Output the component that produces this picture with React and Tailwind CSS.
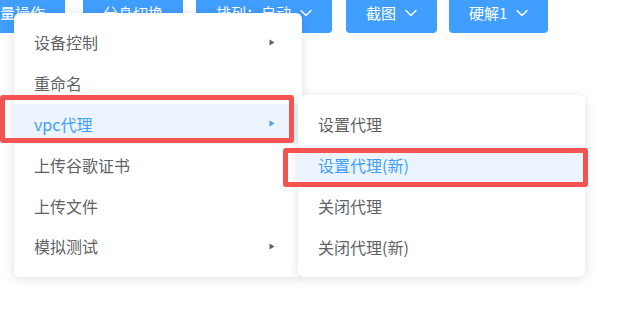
const Chevron = () => (
  <svg width="12" height="8" viewBox="0 0 12 8" fill="none" className="shrink-0">
    <path d="M1 1.5l5 5 5-5" stroke="white" strokeWidth="1.4" strokeLinecap="round" strokeLinejoin="round" />
  </svg>
);

const Caret = ({ active }) => (
  <svg width="6" height="7" viewBox="0 0 6 7" className="shrink-0">
    <path d="M0.5 0.5L5.5 3.5L0.5 6.5Z" fill={active ? "#409eff" : "#606266"} />
  </svg>
);

const buttons = [
  { text: "批量操作", ml: "ml-0" },
  { text: "分身切换", ml: "ml-[18px]" },
  { text: "排列：自动", ml: "ml-[13px]", arrow: true },
  { text: "截图", ml: "ml-[14px]", arrow: true },
  { text: "硬解1", ml: "ml-[12px]", arrow: true },
];

const mainItems = [
  { label: "设备控制", sub: true },
  { label: "重命名" },
  { label: "vpc代理", sub: true, active: true },
  { label: "上传谷歌证书" },
  { label: "上传文件" },
  { label: "模拟测试", sub: true },
];

const subItems = [
  { label: "设置代理" },
  { label: "设置代理(新)", active: true },
  { label: "关闭代理" },
  { label: "关闭代理(新)" },
];

export default function App() {
  return (
    <div
      className="relative w-[640px] h-[310px] bg-white overflow-hidden"
      style={{ fontFamily: '"Noto Sans CJK SC", "Noto Sans", sans-serif' }}
    >
      {/* toolbar */}
      <div className="flex -mt-[7px] -ml-[35px]">
        {buttons.map((b) => (
          <button
            key={b.text}
            className={`${b.ml} h-[40px] px-[20px] flex items-center gap-[9px] bg-[#409eff] text-white text-[15px] rounded-[4px] whitespace-nowrap`}
          >
            <span>{b.text}</span>
            {b.arrow && <Chevron />}
          </button>
        ))}
      </div>

      {/* main dropdown */}
      <div className="absolute left-[14px] top-[13px] w-[288px] pt-[9px] pb-[10px] bg-white rounded-[6px] shadow-[0_2px_12px_rgba(0,0,0,0.12)]">
        {mainItems.map((it) => (
          <div
            key={it.label}
            className={`h-[40.8px] pl-[20px] pr-[27px] flex items-center justify-between text-[16px] ${
              it.active ? "bg-[#ecf5ff] text-[#409eff]" : "text-[#606266]"
            }`}
          >
            <span>{it.label}</span>
            {it.sub && <Caret active={it.active} />}
          </div>
        ))}
      </div>

      {/* sub dropdown */}
      <div className="absolute left-[298px] top-[95px] w-[287px] pt-[9px] pb-[10px] bg-white rounded-[6px] shadow-[0_2px_12px_rgba(0,0,0,0.12)]">
        {subItems.map((it) => (
          <div
            key={it.label}
            className={`h-[40.8px] pl-[20px] flex items-center text-[16px] ${
              it.active ? "bg-[#ecf5ff] text-[#409eff]" : "text-[#606266]"
            }`}
          >
            {it.label}
          </div>
        ))}
      </div>

      {/* annotation boxes */}
      <div className="absolute left-0 top-[95px] w-[294px] h-[48px] border-[5px] border-[#f55252] rounded-[3px]" />
      <div className="absolute left-[283px] top-[148px] w-[305px] h-[39px] border-[5px] border-[#f55252] rounded-[3px]" />
    </div>
  );
}
